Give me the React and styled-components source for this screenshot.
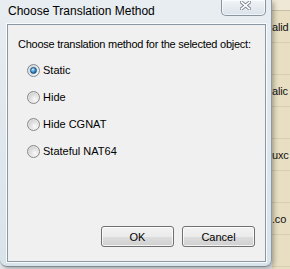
import React from 'react';
import styled, { createGlobalStyle } from 'styled-components';

const Global = createGlobalStyle`
  html, body { margin: 0; padding: 0; }
  body {
    width: 290px; height: 269px; overflow: hidden;
    background: #e9ecee;
    font-family: "Liberation Sans", Arial, sans-serif;
  }
`;

const Desktop = styled.div`
  width: 290px;
  height: 269px;
  display: flex;
  align-items: flex-start;
  background: #e9ecee;
`;

const Window = styled.div`
  position: relative;
  z-index: 1;
  flex: 0 0 272px;
  height: 267px;
  box-sizing: border-box;
  display: flex;
  flex-direction: column;
  padding: 0 5px 4px 7px;
  background: linear-gradient(180deg, #e8edf1 0%, #e0e8ee 45%, #d8e3ea 100%);
  border-right: 1px solid #8d99a3;
  border-bottom: 1px solid #7d8993;
  border-radius: 0 0 7px 7px;
  box-shadow: 2px 2px 5px rgba(0, 0, 0, 0.3);
`;

const TitleBar = styled.div`
  height: 24px;
  flex: 0 0 24px;
  display: flex;
  align-items: flex-start;
  justify-content: space-between;
`;

const Title = styled.div`
  padding: 4px 0 0 1px;
  font-size: 12px;
  line-height: 15px;
  color: #000;
  white-space: nowrap;
`;

const CloseButton = styled.div`
  width: 45px;
  height: 16px;
  box-sizing: border-box;
  display: flex;
  align-items: flex-start;
  justify-content: center;
  padding: 1px 0 0 4px;
  border: 1px solid rgba(105, 118, 132, 0.75);
  border-top: none;
  border-radius: 0 0 5px 5px;
  background: linear-gradient(180deg, #f1f4f7 0%, #e6ebf0 50%, #dbe2e9 100%);
  box-shadow: inset 0 0 0 1px rgba(255, 255, 255, 0.6);
`;

const Client = styled.div`
  flex: 1;
  display: flex;
  flex-direction: column;
  background: #f0f0f0;
  border: 1px solid #8b97a2;
  box-shadow: 0 0 0 1px rgba(255, 255, 255, 0.8);
  padding: 13px 10px 14px 10px;
`;

const Prompt = styled.p`
  margin: 0;
  font-size: 11px;
  line-height: 13px;
  letter-spacing: -0.25px;
  color: #000;
  white-space: nowrap;
`;

const RadioList = styled.div`
  margin-top: 12px;
  padding-left: 9px;
  display: flex;
  flex-direction: column;
  gap: 13px;
`;

const RadioRow = styled.div`
  height: 14px;
  display: flex;
  align-items: center;
  gap: 3px;
`;

const RadioCircle = styled.span`
  width: 13px;
  height: 13px;
  box-sizing: border-box;
  border-radius: 50%;
  display: flex;
  align-items: center;
  justify-content: center;
  border: 1px solid ${(p) => (p.$checked ? '#7c8a98' : '#888888')};
  background: radial-gradient(circle at 62% 66%, #fbfbfb 0%, #e2e2e2 40%, #bdbdbd 100%);
  box-shadow: inset 0 0 0 1px rgba(255, 255, 255, 0.45);
`;

const RadioDot = styled.span`
  width: 7px;
  height: 7px;
  box-sizing: border-box;
  border-radius: 50%;
  border: 1px solid #1b4b78;
  background: radial-gradient(circle at 35% 30%, #d2eefc 0%, #57b0e6 35%, #1f69a8 75%, #184f84 100%);
`;

const RadioLabel = styled.span`
  font-size: 11px;
  line-height: 13px;
  color: #000;
  white-space: nowrap;
`;

const ButtonRow = styled.div`
  margin-top: auto;
  display: flex;
  justify-content: flex-end;
  gap: 8px;
`;

const Button = styled.button`
  width: 73px;
  height: 21px;
  box-sizing: border-box;
  padding: 0;
  font-family: "Liberation Sans", Arial, sans-serif;
  font-size: 11px;
  color: #000;
  border: 1px solid #707070;
  border-radius: 3px;
  background: linear-gradient(180deg, #f2f2f2 0%, #ebebeb 50%, #dddddd 51%, #cfcfcf 100%);
  box-shadow: inset 0 0 0 1px rgba(255, 255, 255, 0.75);
`;

const AppStrip = styled.div`
  flex: 1;
  height: 269px;
  display: flex;
  flex-direction: column;
  background: #e8dfc3;
  overflow: hidden;
`;

const StripHeader = styled.div`
  height: 10px;
  flex: 0 0 10px;
  background: #efe8d6;
  border-bottom: 1px solid #c7bea6;
`;

const StripRow = styled.div`
  height: 31px;
  flex: 0 0 31px;
  display: flex;
  align-items: center;
  border-bottom: 1px solid #d6cdb2;
  font-size: 11px;
  letter-spacing: -0.2px;
  color: #111;
  white-space: nowrap;
`;

const options = [
  { label: 'Static', checked: true },
  { label: 'Hide' },
  { label: 'Hide CGNAT' },
  { label: 'Stateful NAT64' },
];

const stripRows = ['alid', '', 'alic', '', 'uxc', '', '.co', ''];

function CloseGlyph() {
  return (
    <svg width="11" height="9" viewBox="0 0 11 9">
      <path d="M1.5 1.2 L9.5 7.8 M9.5 1.2 L1.5 7.8" stroke="#7d8590" strokeWidth="3.4" strokeLinecap="square" fill="none" />
      <path d="M1.5 1.2 L9.5 7.8 M9.5 1.2 L1.5 7.8" stroke="#ffffff" strokeWidth="1.6" strokeLinecap="square" fill="none" />
    </svg>
  );
}

export default function App() {
  return (
    <>
      <Global />
      <Desktop>
        <Window>
          <TitleBar>
            <Title>Choose Translation Method</Title>
            <CloseButton>
              <CloseGlyph />
            </CloseButton>
          </TitleBar>
          <Client>
            <Prompt>Choose translation method for the selected object:</Prompt>
            <RadioList>
              {options.map((o) => (
                <RadioRow key={o.label}>
                  <RadioCircle $checked={o.checked}>{o.checked && <RadioDot />}</RadioCircle>
                  <RadioLabel>{o.label}</RadioLabel>
                </RadioRow>
              ))}
            </RadioList>
            <ButtonRow>
              <Button>OK</Button>
              <Button>Cancel</Button>
            </ButtonRow>
          </Client>
        </Window>
        <AppStrip>
          <StripHeader />
          {stripRows.map((t, i) => (
            <StripRow key={i}>{t}</StripRow>
          ))}
        </AppStrip>
      </Desktop>
    </>
  );
}
